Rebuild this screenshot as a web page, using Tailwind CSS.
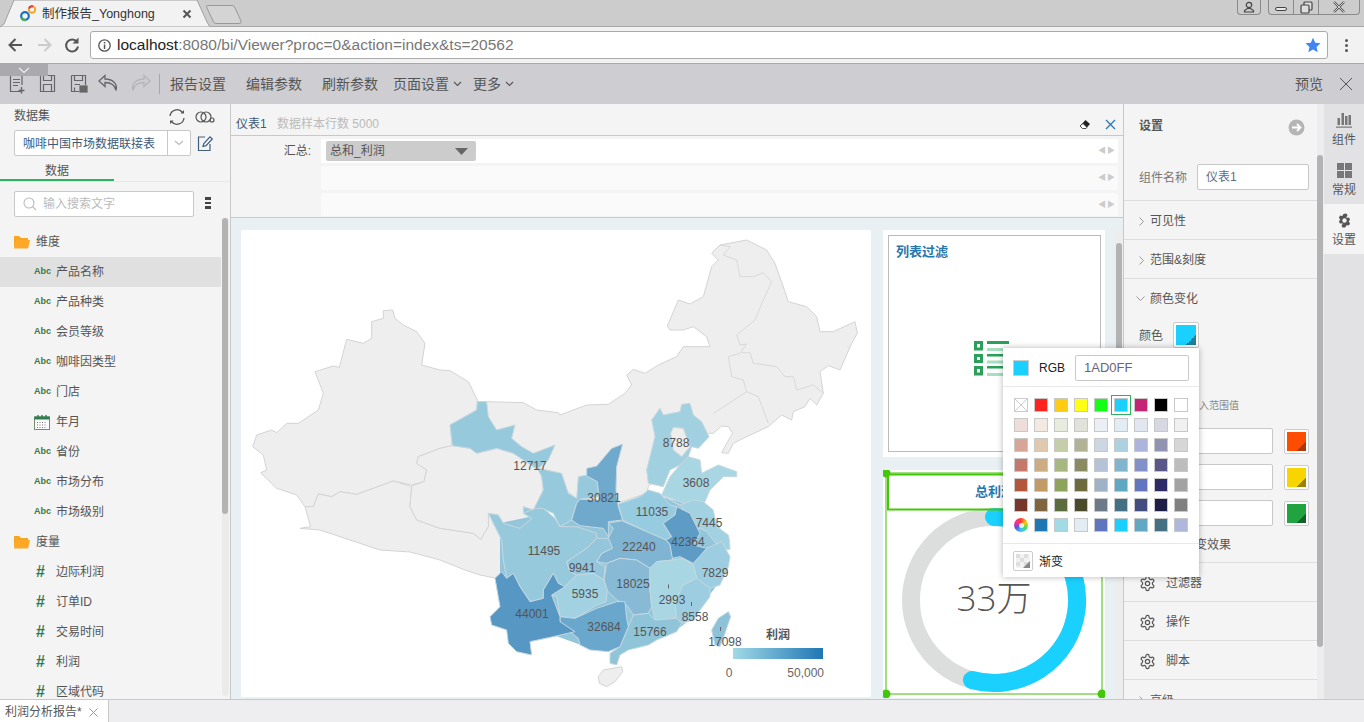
<!DOCTYPE html>
<html lang="zh">
<head>
<meta charset="utf-8">
<script src="https://cdn.jsdelivr.net/npm/@tailwindcss/browser@4"></script>
<title>制作报告_Yonghong</title>
</head>
<body class="[font-family:'Liberation_Sans','Noto_Sans_CJK_SC',sans-serif] text-[12px] text-[#555]">
<div class="relative w-[1364px] h-[722px] overflow-hidden flex flex-col bg-white">

  <!-- browser tab strip -->
  <div class="relative h-[27px] shrink-0 bg-[#cccccc] border-b border-[#a8a8a8]">
    <svg class="absolute left-0 top-0" width="260" height="27" viewBox="0 0 260 27">
      <path d="M0 27 L4 24 L14 0 L197 0 L207 22 L210 27 Z" fill="#f2f2f2" stroke="#a0a0a0" stroke-width="1"/>
      <path d="M207 5.500 H232 Q234 5.500 235 8 L241 21 Q242 23.500 239 23.500 H216 Q214 23.500 213 21 L207 8 Q206 5.500 207 5.500Z" fill="#d4d4d4" stroke="#999" stroke-width="1"/>
      <circle cx="25" cy="16" r="3.800" fill="none" stroke="#1b6fc2" stroke-width="2.200"/>
      <path d="M21.500 17.500 A4 4 0 0 0 26 20" fill="none" stroke="#3cb54a" stroke-width="2.200"/>
      <circle cx="32" cy="9.500" r="3.200" fill="none" stroke="#f5a623" stroke-width="2"/>
      <path d="M29 8.500 A3.200 3.200 0 0 1 33 6.500" fill="none" stroke="#e8324a" stroke-width="2"/>
      <path d="M183.500 10.500 L190.500 17.500 M190.500 10.500 L183.500 17.500" stroke="#555" stroke-width="2"/>
    </svg>
    <span class="absolute left-[42px] top-[5px] text-[12.500px] leading-[18px] text-[#333]">制作报告_Yonghong</span>
    <div class="absolute left-[1237px] top-0 w-[24px] h-[15px] border border-t-0 border-[#8a8a8a] rounded-b-[4px] flex items-center justify-center">
      <svg width="12" height="12" viewBox="0 0 12 12"><circle cx="6" cy="4" r="2.700" fill="none" stroke="#444" stroke-width="1.200"/><path d="M1.500 11 V9.500 L4.500 7.500 H7.500 L10.500 9.500 V11 Z" fill="none" stroke="#444" stroke-width="1.200"/></svg>
    </div>
    <div class="absolute left-[1268px] top-0 w-[92px] h-[15px] border border-t-0 border-[#8a8a8a] rounded-b-[4px] flex">
      <div class="w-[25px] border-r border-[#8a8a8a] flex items-center justify-center"><div class="w-[12px] h-[4px] border border-[#444] rounded-[2px] mt-[3px] bg-[#e8e8e8]"></div></div>
      <div class="w-[25px] border-r border-[#8a8a8a] flex items-center justify-center">
        <svg width="13" height="13" viewBox="0 0 13 13"><rect x="4" y="1" width="8" height="8" rx="1" fill="#ddd" stroke="#444" stroke-width="1.200"/><rect x="1" y="4" width="8" height="8" rx="1" fill="#ddd" stroke="#444" stroke-width="1.200"/></svg>
      </div>
      <div class="flex-1 flex items-center justify-center">
        <svg width="14" height="12" viewBox="0 0 14 12"><path d="M2 1 L12 11 M12 1 L2 11" stroke="#555" stroke-width="2.400"/><path d="M2 1 L12 11 M12 1 L2 11" stroke="#eee" stroke-width=".8"/></svg>
      </div>
    </div>
  </div>

  <!-- browser address row -->
  <div class="h-[37px] shrink-0 bg-[#f2f2f2] border-b border-[#a8a8a8] flex items-center">
    <div class="w-[90px] h-full flex items-center shrink-0">
      <svg width="90" height="36" viewBox="0 0 90 36">
        <path d="M22 18 H10 M15.500 12 L9.500 18 L15.500 24" fill="none" stroke="#555" stroke-width="2"/>
        <path d="M38 18 H50 M44.500 12 L50.500 18 L44.500 24" fill="none" stroke="#ccc" stroke-width="2"/>
        <path d="M77 15 A6 6 0 1 0 78 19.500" fill="none" stroke="#555" stroke-width="2"/>
        <path d="M78.500 10.500 V16.500 H72.500 Z" fill="#555"/>
      </svg>
    </div>
    <div class="w-[1238px] h-[28px] bg-white border border-[#aaa] rounded-[3px] flex items-center pl-[7px] pr-[6px] shrink-0">
      <svg width="13" height="13" viewBox="0 0 13 13" class="shrink-0"><circle cx="6.500" cy="6.500" r="5.700" fill="none" stroke="#555" stroke-width="1.300"/><rect x="5.800" y="5.500" width="1.500" height="4.500" fill="#555"/><rect x="5.800" y="3" width="1.500" height="1.500" fill="#555"/></svg>
      <span class="ml-[6px] text-[15.500px] text-[#777] whitespace-nowrap"><span class="text-[#222]">localhost</span>:8080/bi/Viewer?proc=0&amp;action=index&amp;ts=20562</span>
      <svg class="ml-auto" width="16" height="16" viewBox="0 0 16 16"><path d="M8 .8 L10.200 5.800 L15.500 6.300 L11.500 9.900 L12.700 15.200 L8 12.400 L3.300 15.200 L4.500 9.900 L.5 6.300 L5.800 5.800Z" fill="#4285f4"/></svg>
    </div>
    <div class="flex-1 flex flex-col items-center gap-[2px]">
      <div class="w-[3px] h-[3px] rounded-full bg-[#555]"></div>
      <div class="w-[3px] h-[3px] rounded-full bg-[#555]"></div>
      <div class="w-[3px] h-[3px] rounded-full bg-[#555]"></div>
    </div>
  </div>

  <!-- app toolbar -->
  <div class="relative h-[40px] shrink-0 bg-[#cecdd2] flex items-center text-[14px] text-[#555]">
    <div class="absolute left-0 top-0 w-[48px] h-[12px] bg-[#aaaaae] flex items-center justify-center">
      <svg width="12" height="7" viewBox="0 0 12 7"><path d="M1 1 L6 5.500 L11 1" fill="none" stroke="#eee" stroke-width="1.200"/></svg>
    </div>
    <svg class="ml-[8px] shrink-0" width="150" height="24" viewBox="0 0 150 24">
      <g fill="none" stroke="#666" stroke-width="1.200">
        <path d="M14 19.500 H2.500 V3.500 H14 V13"/><path d="M5 7.500 H12 M5 10.500 H12 M5 13.500 H10"/><path d="M13.500 15 V21.500 M10.500 18.500 H16.500" stroke-width="1.400"/>
        <path d="M32.500 3.500 H46.500 V19.500 H32.500 Z M35.500 3.500 V8.500 H43.500 V3.500 M35.500 12.500 H43.500 V19.500 H35.500Z"/>
        <path d="M63.500 3.500 H77.500 V13 M63.500 3.500 V19.500 H71 M66.500 3.500 V8.500 H74.500 V3.500 M66.500 12.500 H72 M66.500 15.500 V19.500"/>
        <rect x="72" y="14" width="7" height="6" fill="#666"/>
        <path d="M108 18.500 C107 13 103 10.500 97 10.500 V14.500 L91 9 L97 3.500 V7 C104 7 110 11 108 18.500Z" stroke-width="1.300"/>
      </g>
      <path d="M125 18.500 C126 13 130 10.500 136 10.500 V14.500 L142 9 L136 3.500 V7 C129 7 123 11 125 18.500Z" fill="none" stroke="#b5b5b8" stroke-width="1.300"/>
    </svg>
    <div class="w-px h-[20px] bg-[#a8a8ac] ml-[1px] mr-[10px]"></div>
    <span class="w-[76px]">报告设置</span>
    <span class="w-[76px]">编辑参数</span>
    <span class="w-[71px]">刷新参数</span>
    <span>页面设置</span>
    <svg class="ml-[4px] mr-[11px]" width="9" height="6" viewBox="0 0 9 6"><path d="M1 1 L4.500 4.500 L8 1" fill="none" stroke="#555" stroke-width="1.100"/></svg>
    <span>更多</span>
    <svg class="ml-[4px]" width="9" height="6" viewBox="0 0 9 6"><path d="M1 1 L4.500 4.500 L8 1" fill="none" stroke="#555" stroke-width="1.100"/></svg>
    <span class="ml-auto">预览</span>
    <svg class="ml-[16px] mr-[11px]" width="14" height="14" viewBox="0 0 14 14"><path d="M1 1 L13 13 M13 1 L1 13" stroke="#555" stroke-width="1"/></svg>
  </div>

  <!-- main row -->
  <div class="h-[595px] shrink-0 flex overflow-hidden">

    <!-- left data panel -->
    <div class="w-[231px] shrink-0 bg-[#f4f4f4] border-r border-[#c8c8c8] flex flex-col">
      <div class="h-[26px] shrink-0 pl-[14px] flex items-center">
        <span class="mt-[-2px]">数据集</span>
        <svg class="ml-[118px]" width="18" height="18" viewBox="0 0 18 18"><path d="M2 8 A7 7 0 0 1 14.500 4.500 M16 10 A7 7 0 0 1 3.500 13.500" fill="none" stroke="#555" stroke-width="1.300"/><path d="M12.500 5.500 H16 V2 Z M5.500 12.500 H2 V16 Z" fill="#555"/></svg>
        <svg class="ml-[9px]" width="20" height="14" viewBox="0 0 20 14"><circle cx="6" cy="7" r="5" fill="none" stroke="#555" stroke-width="1.200"/><circle cx="11" cy="7" r="5" fill="none" stroke="#555" stroke-width="1.200"/><circle cx="17" cy="10" r="2" fill="none" stroke="#555" stroke-width="1.200"/></svg>
      </div>
      <div class="h-[26px] shrink-0 pl-[14px] flex items-center">
        <div class="w-[177px] h-[26px] bg-white border border-[#c8c8c8] rounded-[2px] flex items-center shrink-0">
          <span class="w-[152px] pl-[8px] pt-[2px] text-[#3d5a78] whitespace-nowrap">咖啡中国市场数据联接表</span>
          <div class="flex-1 h-full border-l border-[#c8c8c8] flex items-center justify-center">
            <svg width="10" height="6" viewBox="0 0 10 6"><path d="M1 1 L5 4.500 L9 1" fill="none" stroke="#bbb" stroke-width="1.200"/></svg>
          </div>
        </div>
        <svg class="ml-[6px]" width="17" height="17" viewBox="0 0 17 17"><path d="M13 9 V15.500 H1.500 V2 H8" fill="none" stroke="#3f5f7f" stroke-width="1.200"/><path d="M6 11.500 L6.800 8.500 L13 1.800 L15.300 4 L9 10.700 Z" fill="none" stroke="#3f5f7f" stroke-width="1.200"/></svg>
      </div>
      <div class="h-[26px] shrink-0 border-b border-[#e8e8e8]">
        <div class="w-[114px] h-[25px] border-b-2 border-[#2cb35f] flex items-center justify-center pt-[6px]"><span>数据</span></div>
      </div>
      <div class="h-[36px] shrink-0 pt-[9px] pl-[14px] flex items-start">
        <div class="w-[180px] h-[26px] bg-white border border-[#c8c8c8] rounded-[2px] flex items-center pl-[8px] text-[#bbb] shrink-0">
          <svg width="14" height="14" viewBox="0 0 14 14"><circle cx="6" cy="6" r="5" fill="none" stroke="#bbb" stroke-width="1.100"/><path d="M9.500 9.500 L13 13" stroke="#bbb" stroke-width="1.100"/></svg>
          <span class="ml-[6px]">输入搜索文字</span>
        </div>
        <div class="ml-[11px] mt-[6px] flex flex-col gap-[2px]">
          <div class="w-[6px] h-[2.500px] bg-[#444]"></div><div class="w-[6px] h-[2.500px] bg-[#444]"></div><div class="w-[6px] h-[2.500px] bg-[#444]"></div>
        </div>
      </div>
      <div class="flex-1 flex overflow-hidden">
        <div class="w-[222px] pt-[9px] shrink-0">
          <div class="h-[30px] flex items-center pl-[14px]">
            <svg width="16" height="14" viewBox="0 0 16 14"><path d="M0 13.500 V1 H5 L7 3 H14 V5 H3 Z" fill="#f5a623"/><path d="M0 13.500 L2.500 5 H16 L14 13.500 Z" fill="#ffa726"/></svg>
            <span class="ml-[6px]">维度</span>
          </div>
          <div class="h-[30px] w-[221px] bg-[#e0e0e1] flex items-center pl-[34px]"><span class="w-[22px] text-[9px] font-bold text-[#3c7a3c]">Abc</span>产品名称</div>
          <div class="h-[30px] flex items-center pl-[34px]"><span class="w-[22px] text-[9px] font-bold text-[#3c7a3c]">Abc</span>产品种类</div>
          <div class="h-[30px] flex items-center pl-[34px]"><span class="w-[22px] text-[9px] font-bold text-[#3c7a3c]">Abc</span>会员等级</div>
          <div class="h-[30px] flex items-center pl-[34px]"><span class="w-[22px] text-[9px] font-bold text-[#3c7a3c]">Abc</span>咖啡因类型</div>
          <div class="h-[30px] flex items-center pl-[34px]"><span class="w-[22px] text-[9px] font-bold text-[#3c7a3c]">Abc</span>门店</div>
          <div class="h-[30px] flex items-center pl-[34px]">
            <svg class="mr-[6px]" width="16" height="15" viewBox="0 0 16 15"><rect x=".5" y="2" width="15" height="12.500" fill="#fff" stroke="#6f8f6f"/><rect x=".5" y="1.500" width="15" height="3" fill="#2f7d4f"/><path d="M4 0 V3 M8 0 V3 M12 0 V3" stroke="#2f7d4f" stroke-width="1.400"/><path d="M3 7.500 H13 M3 10 H13 M3 12.500 H13" stroke="#777" stroke-dasharray="1 1.500"/></svg>年月
          </div>
          <div class="h-[30px] flex items-center pl-[34px]"><span class="w-[22px] text-[9px] font-bold text-[#3c7a3c]">Abc</span>省份</div>
          <div class="h-[30px] flex items-center pl-[34px]"><span class="w-[22px] text-[9px] font-bold text-[#3c7a3c]">Abc</span>市场分布</div>
          <div class="h-[30px] flex items-center pl-[34px]"><span class="w-[22px] text-[9px] font-bold text-[#3c7a3c]">Abc</span>市场级别</div>
          <div class="h-[30px] flex items-center pl-[14px]">
            <svg width="16" height="14" viewBox="0 0 16 14"><path d="M0 13.500 V1 H5 L7 3 H14 V5 H3 Z" fill="#f5a623"/><path d="M0 13.500 L2.500 5 H16 L14 13.500 Z" fill="#ffa726"/></svg>
            <span class="ml-[6px]">度量</span>
          </div>
          <div class="h-[30px] flex items-center pl-[36px]"><span class="w-[20px] text-[16px] font-bold text-[#2f7d4f]">#</span>边际利润</div>
          <div class="h-[30px] flex items-center pl-[36px]"><span class="w-[20px] text-[16px] font-bold text-[#2f7d4f]">#</span>订单ID</div>
          <div class="h-[30px] flex items-center pl-[36px]"><span class="w-[20px] text-[16px] font-bold text-[#2f7d4f]">#</span>交易时间</div>
          <div class="h-[30px] flex items-center pl-[36px]"><span class="w-[20px] text-[16px] font-bold text-[#2f7d4f]">#</span>利润</div>
          <div class="h-[30px] flex items-center pl-[36px]"><span class="w-[20px] text-[16px] font-bold text-[#2f7d4f]">#</span>区域代码</div>
        </div>
        <div class="w-[7px] h-[478px] bg-[#ebebeb] rounded-full">
          <div class="w-[6px] h-[296px] bg-[#b3b3b3] rounded-[3px]"></div>
        </div>
      </div>
    </div>

    <!-- center -->
    <div class="w-[892px] shrink-0 flex flex-col bg-[#f4f4f4]">
      <div class="h-[32px] shrink-0 border-b border-[#c8c8c8] flex items-center pl-[5px] pr-[7px] pt-[9px]">
        <span class="w-[41px] text-[#3d5a78]">仪表1</span>
        <span class="text-[#bbb]">数据样本行数 5000</span>
        <svg class="ml-auto mr-[14px]" width="12" height="11" viewBox="0 0 12 11"><path d="M6.500 1 L11 5 L7 9.500 H3.500 L1 7 Z" fill="#222"/><path d="M1 7 L3.500 9.500 H7 L8 8.400 L4 4.500 Z" fill="#fff" stroke="#222" stroke-width=".7"/></svg>
        <svg width="11" height="11" viewBox="0 0 11 11"><path d="M1 1 L10 10 M10 1 L1 10" stroke="#2b78b0" stroke-width="1.300"/></svg>
      </div>
      <div class="h-[82px] shrink-0 border-b border-[#c8c8c8] pt-[3px] pr-[5px] flex flex-col gap-[3px]">
        <div class="h-[24px] flex items-center">
          <span class="w-[80px] text-right">汇总:</span>
          <div class="ml-[10px] flex-1 h-[24px] bg-white rounded-[2px] flex items-center pl-[5px] pr-[2px]">
            <div class="w-[150px] h-[20px] bg-[#cccccc] rounded-[2px] flex items-center pl-[4px] pr-[8px]">
              <span>总和_利润</span>
              <svg class="ml-auto" width="13" height="7" viewBox="0 0 13 7"><path d="M0 0 H13 L6.500 7 Z" fill="#666"/></svg>
            </div>
            <span class="ml-auto text-[8px] text-[#ccc] tracking-[1px]">◀▶</span>
          </div>
        </div>
        <div class="h-[24px] ml-[90px] bg-[#fafafa] rounded-[2px] flex items-center justify-end pr-[2px]"><span class="text-[8px] text-[#ccc] tracking-[1px]">◀▶</span></div>
        <div class="h-[23px] ml-[90px] bg-[#fafafa] rounded-[2px] flex items-center justify-end pr-[2px]"><span class="text-[8px] text-[#ccc] tracking-[1px]">◀▶</span></div>
      </div>

      <!-- canvas -->
      <div class="flex-1 bg-[#e9f0f4] flex pl-[10px] pt-[12px] overflow-hidden">
        <div class="w-[630px] h-[467px] bg-white shrink-0">
          <svg width="630" height="467" viewBox="241 230 630 467">
            <g stroke="#d2d4d4" stroke-width="3" stroke-linejoin="round">
              <g transform="translate(240 280) scale(.33333)" fill="#eeeeee">
                <path d="M430 92 L458 90 L465 115 L490 135 L530 155 L555 190 L545 255 L600 270 L630 272 L685 305 L712 360 L710 390 L630 435 L637 497 L600 505 L535 530 L530 550 L560 570 L552 605 L515 615 L460 603 L400 625 L350 643 L300 635 L275 650 L235 642 L220 680 L195 680 L170 645 L110 625 L62 578 L80 570 L70 525 L38 500 L50 465 L95 450 L110 458 L140 430 L175 430 L235 390 L250 340 L225 275 L280 258 L298 262 L320 178 L370 190 L395 175 L395 125 L430 115 Z"/>
                <path d="M515 620 L510 680 L530 720 L600 745 L700 760 L722 778 L745 740 L745 700 L786 780 L789 840 L795 876 L765 894 L720 885 L675 870 L600 840 L510 816 L420 810 L330 780 L240 750 L180 745 L212 740 L195 680 L220 680 L235 642 L275 650 L300 635 L350 643 L400 625 L460 603 Z"/>
                <path d="M637 497 L600 505 L535 530 L530 550 L560 570 L552 605 L515 618 L510 680 L530 720 L600 745 L700 760 L722 778 L745 740 L745 700 L775 705 L790 730 L840 745 L875 715 L850 680 L880 690 L910 630 L905 590 L895 570 L820 520 L770 505 L710 520 L690 505 Z"/>
              </g>
              <g transform="translate(480 220) scale(.33333)">
                <path fill="#eeeeee" d="M-8 545 L20 545 L130 548 L170 570 L235 578 L240 585 L320 555 L385 553 L435 520 L455 495 L440 465 L460 448 L495 460 L535 435 L590 410 L610 380 L690 380 L680 350 L640 320 L610 330 L570 330 L562 318 L595 240 L630 252 L670 230 L695 140 L715 120 L695 100 L720 75 L800 60 L860 90 L885 130 L915 215 L925 245 L980 260 L1010 290 L1020 335 L1060 335 L1125 305 L1132 340 L1115 370 L1080 450 L1045 437 L1020 455 L1030 520 L1010 555 L990 535 L975 560 L940 575 L935 600 L905 585 L865 620 L800 650 L760 670 L745 700 L725 698 L740 670 L758 640 L745 620 L725 618 L700 640 L685 640 L600 700 L505 800 L500 820 L410 850 L320 860 L245 800 L100 680 L50 640 Z"/>
                <g fill="none" stroke-width="2.500">
                  <path d="M720 75 L750 80 L730 105 L770 120 L780 170 L820 170 L850 158 L875 185 L850 240 L825 300 L770 345 L780 375 L800 372 L780 400 L745 410 L755 470 L790 480 L800 515 L700 580 M800 515 L835 530 L865 610 M785 398 L810 398 L820 430 L890 440 L915 470 L940 470 L950 510 L1000 495 L1030 520"/>
                </g>
                <g transform="translate(0 810)"><path fill="#93c6da" stroke="none" d="M60 100 L150 80 L190 60 L240 100 L300 30 L415 45 L500 10 L545 20 L690 60 L735 140 L740 200 L715 280 L685 320 L635 385 L590 420 L505 460 L420 470 L330 475 L220 435 L150 450 L85 420 L60 350 Z"/></g>
                <g stroke="#c6d8e0">
                  <path fill="#a1d0e0" d="M515 600 L540 565 L550 585 L600 575 L605 553 L630 550 L640 585 L665 605 L687 650 L655 685 L635 680 L625 710 L600 735 L570 750 L550 800 L505 790 L500 750 L525 650 Z"/>
                  <path fill="#eeeeee" stroke="#d2d4d4" d="M580 622 L610 625 L630 680 L605 710 L580 690 L572 640 Z"/>
                  <path fill="#a8d6e2" d="M625 710 L660 720 L665 760 L715 735 L770 755 L770 770 L730 770 L690 810 L675 845 L630 860 L600 845 L545 825 L570 770 L600 735 Z"/>
                  <path fill="#97c9dc" d="M-8 545 L20 545 L25 590 L50 630 L105 615 L95 655 L125 680 L160 700 L225 675 L205 720 L175 745 L245 760 L265 820 L290 835 L295 770 L320 765 L352 785 L357 830 L300 838 L290 850 L275 900 L240 920 L220 880 L185 865 L155 895 L130 880 L130 860 L160 870 L190 810 L185 770 L175 750 L100 700 L50 685 L-10 700 L-30 685 L-83 677 L-90 615 L-10 570 Z"/>
                  <path fill="#6fa9cc" d="M428 672 L395 685 L350 738 L320 745 L320 768 L352 785 L357 830 L355 840 L300 838 L290 850 L275 900 L300 917 L370 925 L385 950 L385 905 L428 900 L415 860 L408 810 L410 740 Z"/>
                </g>
              </g>
              <g transform="translate(480 490) scale(.33333)" stroke="#c6d8e0">
                <path fill="#97cbdf" d="M415 42 L480 20 L505 0 L540 10 L570 45 L590 50 L585 75 L550 100 L575 140 L558 150 L510 130 L500 125 L428 90 Z"/>
                <path fill="#a2d2e2" d="M545 15 L600 45 L640 30 L670 35 L700 60 L710 110 L745 135 L748 150 L750 178 L720 178 L700 150 L680 125 L660 115 L640 120 L605 50 Z"/>
                <path fill="#9ccde0" d="M680 175 L725 155 L750 200 L745 230 L720 285 L690 295 L650 265 L640 225 L640 220 Z"/>
                <path fill="#5e9cc6" d="M590 50 L630 70 L650 110 L660 130 L640 165 L680 175 L640 220 L600 200 L575 205 L570 165 L558 150 L575 140 L550 100 L585 75 Z"/>
                <path fill="#7fb4d2" d="M385 100 L425 92 L500 125 L558 150 L570 165 L578 210 L530 215 L510 235 L470 210 L420 205 L380 220 L350 215 L365 190 L395 175 L385 145 L400 115 Z"/>
                <path fill="#97c9dc" d="M25 70 L55 75 L70 100 L120 115 L155 85 L130 70 L165 55 L190 55 L225 85 L240 110 L290 110 L350 130 L350 145 L320 175 L260 215 L270 245 L290 255 L255 290 L235 280 L220 250 L190 300 L190 325 L150 335 L120 290 L100 250 L80 265 L70 210 L65 150 Z"/>
                <path fill="#93c6da" d="M350 145 L385 145 L398 175 L365 190 L350 215 L375 230 L372 270 L340 250 L290 255 L270 245 L260 215 L320 175 Z"/>
                <path fill="#88bad6" d="M380 220 L420 205 L470 210 L510 235 L510 300 L515 350 L505 370 L460 375 L440 345 L410 330 L380 300 L372 270 Z"/>
                <path fill="#a8d6e2" d="M510 235 L530 215 L578 210 L610 205 L640 225 L650 265 L610 285 L585 335 L590 385 L525 390 L515 350 L510 300 Z"/>
                <path fill="#9ccde0" d="M650 265 L690 295 L690 320 L660 360 L640 390 L605 400 L590 385 L585 335 L610 285 Z"/>
                <path fill="#90c5d9" d="M460 375 L505 370 L525 390 L590 385 L605 400 L590 425 L530 450 L505 465 L445 480 L420 495 L410 525 L390 520 L390 490 L420 470 L445 410 Z"/>
                <path fill="#a2d2e2" d="M290 255 L340 250 L372 270 L382 300 L378 335 L350 345 L285 385 L240 380 L230 320 L210 315 L255 290 Z"/>
                <path fill="#69a7cc" d="M240 380 L285 385 L350 355 L410 335 L435 335 L440 385 L445 410 L420 470 L385 485 L330 480 L300 465 L295 445 L270 425 L240 395 Z"/>
                <path fill="#5797c4" d="M65 245 L80 265 L100 250 L120 290 L150 335 L190 325 L190 300 L220 250 L235 280 L255 290 L215 315 L240 380 L240 395 L285 425 L220 440 L150 455 L155 495 L110 485 L85 460 L80 420 L35 405 L30 380 L60 350 L45 265 Z"/>
                <path fill="#8dc2d8" d="M745 365 L752 380 L735 430 L720 470 L705 465 L695 420 L715 385 Z"/>
                <path fill="#eeeeee" stroke="#d2d4d4" d="M355 560 L370 540 L425 530 L428 545 L405 575 L380 590 L358 580 Z"/>
              </g>
            </g>
            <path d="M668.500 584.500 V588.500 M691.500 602 V606 M720.500 627 V631" stroke="#666" stroke-width="1"/>
            <g fill="#555" font-size="12" text-anchor="middle" transform="translate(0 1)">
              <text x="530" y="469">12717</text><text x="676" y="446">8788</text><text x="696" y="486">3608</text>
              <text x="604" y="501">30821</text><text x="652" y="515">11035</text><text x="709" y="526">7445</text>
              <text x="688" y="545">42364</text><text x="544" y="554">11495</text><text x="639" y="550">22240</text>
              <text x="582" y="571">9941</text><text x="715" y="576">7829</text><text x="633" y="587">18025</text>
              <text x="585" y="597">5935</text><text x="672" y="603">2993</text><text x="695" y="620">8558</text>
              <text x="532" y="617">44001</text><text x="604" y="630">32684</text><text x="650" y="635">15766</text>
              <text x="725" y="645">17098</text>
            </g>
            <defs><linearGradient id="lg"><stop offset="0" stop-color="#a1d9e6"/><stop offset="1" stop-color="#1f76b4"/></linearGradient></defs>
            <rect x="733" y="648" width="90" height="11" fill="url(#lg)"/>
            <text x="778" y="639" text-anchor="middle" fill="#555" font-size="12" font-weight="bold">利润</text>
            <text x="729" y="677" text-anchor="middle" fill="#666" font-size="12">0</text>
            <text x="824" y="677" text-anchor="end" fill="#666" font-size="12">50,000</text>
          </svg>
        </div>
        <div class="w-[222px] ml-[12px] shrink-0 flex flex-col gap-[13px]">
          <div class="h-[227px] bg-white pl-[5px] pr-[4px] py-[5px]">
            <div class="h-[217px] border border-[#bbb]">
              <div class="pl-[7px] pt-[7px] text-[13px] font-bold text-[#2878b0] leading-[18px]">列表过滤</div>
              <svg class="ml-[85px] mt-[80px]" width="36" height="36" viewBox="0 0 36 36">
                <g fill="#fff" stroke="#2aa05a" stroke-width="3"><rect x="1.500" y="1.500" width="6" height="6.500"/><rect x="1.500" y="14.500" width="6" height="6"/><rect x="1.500" y="26.500" width="6" height="6.500"/></g>
                <g fill="#2aa05a"><rect x="13" y="0" width="22" height="3"/><rect x="13" y="13" width="18" height="2.500"/><rect x="13" y="25" width="18" height="2.500"/></g>
                <g fill="#a8dfc2"><rect x="13" y="7" width="18" height="3"/><rect x="13" y="19.500" width="18" height="3"/><rect x="13" y="32" width="18" height="3"/></g>
              </svg>
            </div>
          </div>
          <div class="h-[228px] bg-white shrink-0">
            <svg width="222" height="228" viewBox="883 470 222 228">
              <circle cx="994" cy="600" r="83" fill="none" stroke="#dcdedd" stroke-width="18"/>
              <path d="M994 517 A83 83 0 1 1 972 680" fill="none" stroke="#1ad0ff" stroke-width="18" stroke-linecap="round"/>
              <text x="994" y="611" text-anchor="middle" font-size="35" fill="#555" font-weight="300" font-family="'Open Sans','Noto Sans CJK SC',sans-serif">33万</text>
              <text x="975" y="496" font-size="13" font-weight="bold" fill="#2878b0">总利润</text>
              <rect x="886" y="473" width="216" height="221" fill="none" stroke="#a0e080" stroke-width="2"/>
              <rect x="888" y="474.500" width="214" height="35" fill="none" stroke="#44c708" stroke-width="2"/>
              <circle cx="886" cy="473" r="4.500" fill="#44c708"/><circle cx="886" cy="694" r="4.500" fill="#44c708"/><circle cx="1102" cy="694" r="4.500" fill="#44c708"/>
            </svg>
          </div>
        </div>
        <div class="w-[8px] ml-[10px] h-full shrink-0 bg-[#ededed] pt-[13px]">
          <div class="w-[6px] mx-auto h-[260px] bg-[#b3b3b3] rounded-[3px]"></div>
        </div>
      </div>
    </div>

    <!-- right settings -->
    <div class="w-[201px] shrink-0 bg-[#f4f4f4] border-l border-[#c8c8c8] flex">
      <div class="w-[193px] shrink-0">
        <div class="h-[60px] pl-[15px] relative">
          <div class="pt-[13px] font-bold leading-[18px] text-[#555]">设置</div>
          <svg class="absolute left-[164px] top-[15px]" width="17" height="17" viewBox="0 0 17 17"><circle cx="8.500" cy="8.500" r="8" fill="#b5b5b5"/><path d="M4 8.500 H12.500 M9 5 L12.500 8.500 L9 12" fill="none" stroke="#fff" stroke-width="1.800"/></svg>
        </div>
        <div class="h-[37px] pl-[15px] border-b border-[#ddd] flex items-start">
          <span class="w-[58px] leading-[28px] text-[#777]">组件名称</span>
          <div class="w-[112px] h-[26px] bg-white border border-[#c8c8c8] rounded-[2px] pl-[8px] leading-[25px] text-[#5a7088]">仪表1</div>
        </div>
        <div class="h-[39px] pl-[15px] pt-[2px] border-b border-[#ddd] flex items-center">
          <svg class="mr-[6px]" width="5" height="9" viewBox="0 0 5 9"><path d="M.5 .5 L4.500 4.500 L.5 8.500" fill="none" stroke="#999"/></svg>可见性
        </div>
        <div class="h-[39px] pl-[15px] pt-[2px] border-b border-[#ddd] flex items-center">
          <svg class="mr-[6px]" width="5" height="9" viewBox="0 0 5 9"><path d="M.5 .5 L4.500 4.500 L.5 8.500" fill="none" stroke="#999"/></svg>范围&amp;刻度
        </div>
        <div class="h-[39px] pl-[12px] flex items-center">
          <svg class="mr-[5px]" width="9" height="5" viewBox="0 0 9 5"><path d="M.5 .5 L4.500 4.500 L8.500 .5" fill="none" stroke="#999"/></svg>颜色变化
        </div>
        <div class="h-[26px] mt-[4px] pl-[15px] flex items-center">
          <span class="w-[34px] pt-[2px]">颜色</span>
          <div class="w-[26px] h-[26px] bg-white border border-[#ccc] rounded-[2px] p-[2px]">
            <div class="w-full h-full bg-[linear-gradient(135deg,#1ad0ff_0%,#1ad0ff_75%,#1e7f9e_75%,#1e7f9e_100%)]"></div>
          </div>
        </div>
        <div class="h-[80px] pl-[75px] pt-[50px] text-[10px] leading-[16px] text-[#888]">入范围值</div>
        <div class="h-[26px] flex items-center pl-[35px] mb-[10px]">
          <div class="w-[114px] h-[26px] bg-white border border-[#c8c8c8] rounded-[2px]"></div>
          <div class="ml-[11px] w-[25px] h-[25px] bg-white border border-[#ccc] rounded-[2px] p-[2px]"><div class="w-full h-full bg-[linear-gradient(135deg,#ff4d00_0%,#ff4d00_75%,#a83a10_75%,#a83a10_100%)]"></div></div>
        </div>
        <div class="h-[26px] flex items-center pl-[35px] mb-[10px]">
          <div class="w-[114px] h-[26px] bg-white border border-[#c8c8c8] rounded-[2px]"></div>
          <div class="ml-[11px] w-[25px] h-[25px] bg-white border border-[#ccc] rounded-[2px] p-[2px]"><div class="w-full h-full bg-[linear-gradient(135deg,#f8d400_0%,#f8d400_75%,#9a8200_75%,#9a8200_100%)]"></div></div>
        </div>
        <div class="h-[26px] flex items-center pl-[35px]">
          <div class="w-[114px] h-[26px] bg-white border border-[#c8c8c8] rounded-[2px]"></div>
          <div class="ml-[11px] w-[25px] h-[25px] bg-white border border-[#ccc] rounded-[2px] p-[2px]"><div class="w-full h-full bg-[linear-gradient(135deg,#21a33f_0%,#21a33f_75%,#14622a_75%,#14622a_100%)]"></div></div>
        </div>
        <div class="h-[37px] pl-[59px] pt-[2px] border-b border-[#ddd] flex items-center">渐变效果</div>
        <div class="h-[39px] pl-[15px] pt-[2px] border-b border-[#ddd] flex items-center">
          <svg class="mr-[10px]" width="17" height="17" viewBox="0 0 24 24" fill="none" stroke="#555" stroke-width="1.700"><path d="M12.220 2h-.44a2 2 0 0 0-2 2v.18a2 2 0 0 1-1 1.730l-.43.25a2 2 0 0 1-2 0l-.15-.08a2 2 0 0 0-2.730.73l-.22.38a2 2 0 0 0 .73 2.730l.15.1a2 2 0 0 1 1 1.720v.51a2 2 0 0 1-1 1.740l-.15.09a2 2 0 0 0-.73 2.730l.22.38a2 2 0 0 0 2.730.73l.15-.08a2 2 0 0 1 2 0l.43.25a2 2 0 0 1 1 1.730V20a2 2 0 0 0 2 2h.44a2 2 0 0 0 2-2v-.18a2 2 0 0 1 1-1.730l.43-.25a2 2 0 0 1 2 0l.15.08a2 2 0 0 0 2.730-.73l.22-.39a2 2 0 0 0-.73-2.730l-.15-.08a2 2 0 0 1-1-1.740v-.5a2 2 0 0 1 1-1.740l.15-.09a2 2 0 0 0 .73-2.730l-.22-.38a2 2 0 0 0-2.730-.73l-.15.08a2 2 0 0 1-2 0l-.43-.25a2 2 0 0 1-1-1.730V4a2 2 0 0 0-2-2z"/><circle cx="12" cy="12" r="3"/></svg>过滤器
        </div>
        <div class="h-[39px] pl-[15px] pt-[2px] border-b border-[#ddd] flex items-center">
          <svg class="mr-[10px]" width="17" height="17" viewBox="0 0 24 24" fill="none" stroke="#555" stroke-width="1.700"><path d="M12.220 2h-.44a2 2 0 0 0-2 2v.18a2 2 0 0 1-1 1.730l-.43.25a2 2 0 0 1-2 0l-.15-.08a2 2 0 0 0-2.730.73l-.22.38a2 2 0 0 0 .73 2.730l.15.1a2 2 0 0 1 1 1.720v.51a2 2 0 0 1-1 1.740l-.15.09a2 2 0 0 0-.73 2.730l.22.38a2 2 0 0 0 2.730.73l.15-.08a2 2 0 0 1 2 0l.43.25a2 2 0 0 1 1 1.730V20a2 2 0 0 0 2 2h.44a2 2 0 0 0 2-2v-.18a2 2 0 0 1 1-1.730l.43-.25a2 2 0 0 1 2 0l.15.08a2 2 0 0 0 2.730-.73l.22-.39a2 2 0 0 0-.73-2.730l-.15-.08a2 2 0 0 1-1-1.740v-.5a2 2 0 0 1 1-1.740l.15-.09a2 2 0 0 0 .73-2.730l-.22-.38a2 2 0 0 0-2.730-.73l-.15.08a2 2 0 0 1-2 0l-.43-.25a2 2 0 0 1-1-1.730V4a2 2 0 0 0-2-2z"/><circle cx="12" cy="12" r="3"/></svg>操作
        </div>
        <div class="h-[39px] pl-[15px] pt-[2px] border-b border-[#ddd] flex items-center">
          <svg class="mr-[10px]" width="17" height="17" viewBox="0 0 24 24" fill="none" stroke="#555" stroke-width="1.700"><path d="M12.220 2h-.44a2 2 0 0 0-2 2v.18a2 2 0 0 1-1 1.730l-.43.25a2 2 0 0 1-2 0l-.15-.08a2 2 0 0 0-2.730.73l-.22.38a2 2 0 0 0 .73 2.730l.15.1a2 2 0 0 1 1 1.720v.51a2 2 0 0 1-1 1.740l-.15.09a2 2 0 0 0-.73 2.730l.22.38a2 2 0 0 0 2.730.73l.15-.08a2 2 0 0 1 2 0l.43.25a2 2 0 0 1 1 1.730V20a2 2 0 0 0 2 2h.44a2 2 0 0 0 2-2v-.18a2 2 0 0 1 1-1.730l.43-.25a2 2 0 0 1 2 0l.15.08a2 2 0 0 0 2.730-.73l.22-.39a2 2 0 0 0-.73-2.730l-.15-.08a2 2 0 0 1-1-1.740v-.5a2 2 0 0 1 1-1.740l.15-.09a2 2 0 0 0 .73-2.730l-.22-.38a2 2 0 0 0-2.730-.73l-.15.08a2 2 0 0 1-2 0l-.43-.25a2 2 0 0 1-1-1.730V4a2 2 0 0 0-2-2z"/><circle cx="12" cy="12" r="3"/></svg>脚本
        </div>
        <div class="h-[39px] pl-[15px] pt-[2px] flex items-center">
          <svg class="mr-[6px]" width="5" height="9" viewBox="0 0 5 9"><path d="M.5 .5 L4.500 4.500 L.5 8.500" fill="none" stroke="#999"/></svg>高级
        </div>
      </div>
      <div class="w-[7px] shrink-0 bg-[#ededed] pt-[51px]">
        <div class="w-[6px] h-[492px] bg-[#b3b3b3] rounded-[3px]"></div>
      </div>
    </div>

    <!-- right rail -->
    <div class="w-[40px] shrink-0 bg-[#e2e2e4] flex flex-col">
      <div class="h-[50px] flex flex-col items-center pt-[8px] gap-[3px]">
        <svg width="16" height="16" viewBox="0 0 16 16"><g fill="#777"><rect x="1.500" y="6" width="2.500" height="7"/><rect x="5.500" y="1" width="2.500" height="12"/><rect x="9" y="4" width="2.500" height="9"/><rect x="12.500" y="3" width="2.500" height="10"/><rect x="0" y="14.500" width="16" height="1.200"/></g></svg>
        <span>组件</span>
      </div>
      <div class="h-[50px] flex flex-col items-center pt-[9px] gap-[3px]">
        <svg width="15" height="15" viewBox="0 0 15 15"><g fill="#777"><rect width="7" height="7"/><rect x="8" width="7" height="7"/><rect y="8" width="7" height="7"/><rect x="8" y="8" width="7" height="7"/></g></svg>
        <span>常规</span>
      </div>
      <div class="h-[50px] bg-[#f4f4f4] flex flex-col items-center pt-[9px] gap-[3px]">
        <svg width="15" height="15" viewBox="0 0 24 24"><path fill="#555" d="M12.220 1h-.44a2.500 2.500 0 0 0-2.500 2.500v.4l-1.500.9-.35-.2a2.500 2.500 0 0 0-3.400.9l-.3.5a2.500 2.500 0 0 0 .9 3.400l.35.2v1.800l-.35.2a2.500 2.500 0 0 0-.9 3.400l.3.5a2.500 2.500 0 0 0 3.400.9l.35-.2 1.500.9v.4A2.500 2.500 0 0 0 11.780 23h.44a2.500 2.500 0 0 0 2.500-2.500v-.4l1.500-.9.35.2a2.500 2.500 0 0 0 3.400-.9l.3-.5a2.500 2.500 0 0 0-.9-3.400l-.35-.2v-1.800l.35-.2a2.500 2.500 0 0 0 .9-3.400l-.3-.5a2.500 2.500 0 0 0-3.400-.9l-.35.2-1.500-.9v-.4A2.500 2.500 0 0 0 12.220 1z"/><circle cx="12" cy="12" r="3.500" fill="#f4f4f4"/></svg>
        <span>设置</span>
      </div>
    </div>
  </div>

  <!-- bottom tab bar -->
  <div class="h-[23px] shrink-0 bg-[#eeeef0] border-t border-[#c8c8c8] flex">
    <div class="w-[109px] h-full bg-white border-r border-[#c8c8c8] flex items-center pl-[5px] pt-[2px]">
      <span class="text-[#555]">利润分析报告*</span>
      <svg class="ml-[7px]" width="9" height="9" viewBox="0 0 9 9"><path d="M.5 .5 L8.500 8.500 M8.500 .5 L.5 8.500" stroke="#999"/></svg>
    </div>
  </div>

  <!-- colour popup -->
  <div class="absolute left-[1003px] top-[348px] w-[196px] h-[229px] bg-white shadow-[0_0_6px_rgba(0,0,0,0.3)] flex flex-col">
    <div class="h-[39px] shrink-0 border-b border-[#e8e8e8] flex items-start pl-[10px] pt-[7px]">
      <div class="w-[16px] h-[16px] mt-[5px] bg-[#1ad0ff] border border-[#ccc]"></div>
      <span class="ml-[10px] mt-[4px] leading-[18px] text-[#222]">RGB</span>
      <div class="ml-[10px] w-[114px] h-[26px] border border-[#c8c8c8] rounded-[2px] pl-[8px] leading-[24px] text-[13px] text-[#667]">1AD0FF</div>
    </div>
    <div class="h-[157px] shrink-0 border-b border-[#e8e8e8] pl-[11px] pt-[11px]">
      <div class="grid grid-cols-[repeat(9,14px)] auto-rows-[14px] gap-[6px]">
        <div class="border border-[#ccc] bg-white"><svg width="12" height="12" viewBox="0 0 12 12"><path d="M0 0 L12 12 M12 0 L0 12" stroke="#ccc"/></svg></div>
        <div class="border border-[#c8c8c8] bg-[#fe231e]"></div><div class="border border-[#c8c8c8] bg-[#fecc14]"></div><div class="border border-[#c8c8c8] bg-[#ffff14]"></div><div class="border border-[#c8c8c8] bg-[#14ff14]"></div>
        <div class="border border-[#c8c8c8] bg-[#1ad0ff] outline outline-[#2cb35f] outline-offset-[2px]"></div>
        <div class="border border-[#c8c8c8] bg-[#c42474]"></div><div class="border border-[#c8c8c8] bg-[#000000]"></div><div class="border border-[#c8c8c8] bg-[#ffffff]"></div>

        <div class="border border-[#c8c8c8] bg-[#eeddd8]"></div><div class="border border-[#c8c8c8] bg-[#f2eae0]"></div><div class="border border-[#c8c8c8] bg-[#e8ecdf]"></div><div class="border border-[#c8c8c8] bg-[#e1e2da]"></div><div class="border border-[#c8c8c8] bg-[#ebeff3]"></div><div class="border border-[#c8c8c8] bg-[#e1edf3]"></div><div class="border border-[#c8c8c8] bg-[#e2e6f0]"></div><div class="border border-[#c8c8c8] bg-[#d5d8e3]"></div><div class="border border-[#c8c8c8] bg-[#f0f0f0]"></div>

        <div class="border border-[#c8c8c8] bg-[#d8a698]"></div><div class="border border-[#c8c8c8] bg-[#e0c9ac]"></div><div class="border border-[#c8c8c8] bg-[#c4cfa9]"></div><div class="border border-[#c8c8c8] bg-[#b2b297]"></div><div class="border border-[#c8c8c8] bg-[#ccd7e3]"></div><div class="border border-[#c8c8c8] bg-[#aed1e0]"></div><div class="border border-[#c8c8c8] bg-[#adb5dc]"></div><div class="border border-[#c8c8c8] bg-[#9293b0]"></div><div class="border border-[#c8c8c8] bg-[#d6d6d6]"></div>

        <div class="border border-[#c8c8c8] bg-[#c5796a]"></div><div class="border border-[#c8c8c8] bg-[#cdac82]"></div><div class="border border-[#c8c8c8] bg-[#a6b87f]"></div><div class="border border-[#c8c8c8] bg-[#8a8a63]"></div><div class="border border-[#c8c8c8] bg-[#b4c3d6]"></div><div class="border border-[#c8c8c8] bg-[#81b5ce]"></div><div class="border border-[#c8c8c8] bg-[#8291c9]"></div><div class="border border-[#c8c8c8] bg-[#5b5688]"></div><div class="border border-[#c8c8c8] bg-[#bdbdbd]"></div>

        <div class="border border-[#c8c8c8] bg-[#b3563c]"></div><div class="border border-[#c8c8c8] bg-[#c19a65]"></div><div class="border border-[#c8c8c8] bg-[#8ea35c]"></div><div class="border border-[#c8c8c8] bg-[#6d6a3e]"></div><div class="border border-[#c8c8c8] bg-[#9fb2c8]"></div><div class="border border-[#c8c8c8] bg-[#5fa8c4]"></div><div class="border border-[#c8c8c8] bg-[#6475bf]"></div><div class="border border-[#c8c8c8] bg-[#2d2a66]"></div><div class="border border-[#c8c8c8] bg-[#a3a3a3]"></div>

        <div class="border border-[#c8c8c8] bg-[#78372b]"></div><div class="border border-[#c8c8c8] bg-[#80663f]"></div><div class="border border-[#c8c8c8] bg-[#5d6c3c]"></div><div class="border border-[#c8c8c8] bg-[#4b4a2a]"></div><div class="border border-[#c8c8c8] bg-[#6c7a8a]"></div><div class="border border-[#c8c8c8] bg-[#447084]"></div><div class="border border-[#c8c8c8] bg-[#434e80]"></div><div class="border border-[#c8c8c8] bg-[#1e1d47]"></div><div class="border border-[#c8c8c8] bg-[#808080]"></div>

        <div class="rounded-full bg-[conic-gradient(#ff3b30,#ffcc00,#4cd964,#34c8ff,#5856d6,#ff2d92,#ff3b30)] flex items-center justify-center"><div class="w-[5px] h-[5px] rounded-full bg-white/80"></div></div>
        <div class="border border-[#c8c8c8] bg-[#1f77b4]"></div><div class="border border-[#c8c8c8] bg-[#a0dbe6]"></div><div class="border border-[#c8c8c8] bg-[#e1edf3]"></div><div class="border border-[#c8c8c8] bg-[#6174bf]"></div><div class="border border-[#c8c8c8] bg-[#1ad0ff]"></div><div class="border border-[#c8c8c8] bg-[#62a8c4]"></div><div class="border border-[#c8c8c8] bg-[#447084]"></div><div class="border border-[#c8c8c8] bg-[#aeb7dc]"></div>
      </div>
    </div>
    <div class="flex-1 flex items-center pl-[10px]">
      <div class="w-[20px] h-[20px] border border-[#ccc] rounded-[2px] p-[2px]">
        <svg width="14" height="14" viewBox="0 0 14 14"><rect width="14" height="14" fill="#f2f2f2"/><path d="M0 0 H4 V4 H0Z M8 0 H12 V4 H8Z M4 4 H8 V8 H4Z M0 8 H4 V12 H0Z M8 8 H12 V12 H8Z" fill="#dedede"/><path d="M14 7 V14 H7 Z" fill="#888"/></svg>
      </div>
      <span class="ml-[6px] pt-[2px] text-[#222]">渐变</span>
    </div>
  </div>
</div>
</body>
</html>
